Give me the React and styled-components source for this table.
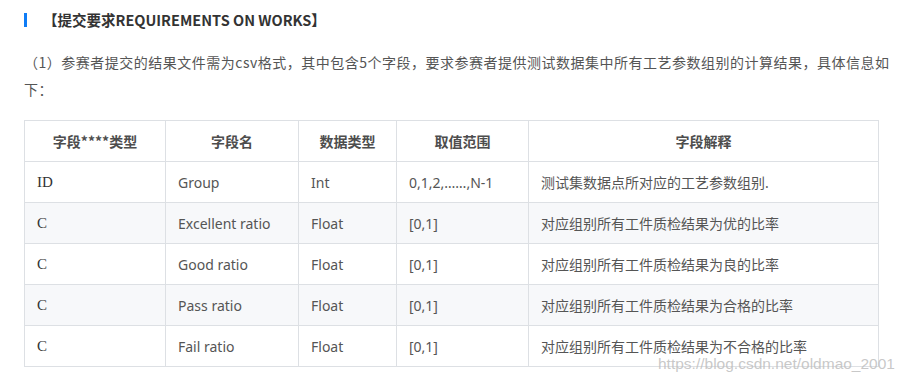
import React from "react";
import styled, { createGlobalStyle } from "styled-components";

const Global = createGlobalStyle`
  html, body { margin: 0; padding: 0; background: #fff; }
  body { font-family: "Noto Sans CJK SC", "Noto Sans", sans-serif; }
`;

const Page = styled.div`
  position: relative;
  width: 907px;
  height: 383px;
  padding: 13px 0 0 24px;
  box-sizing: border-box;
  overflow: hidden;
`;

const Heading = styled.h4`
  margin: 0;
  border-left: 3px solid #0f7cf6;
  padding-left: 16px;
  height: 14px;
  line-height: 14px;
  font-size: 14.5px;
  font-weight: 700;
  color: #333;
`;

const Para = styled.p`
  margin: 22px 0 0 0;
  width: 866px;
  font-size: 14px;
  line-height: 27px;
  color: #555;
  letter-spacing: 0.5px;
`;

const Table = styled.table`
  margin-top: 17px;
  width: 855px;
  border-collapse: collapse;
  table-layout: fixed;
  font-size: 14px;
  color: #555;
`;

const Row = styled.tr`
  background: ${(p) => (p.$striped ? "#f7f8fa" : "#fff")};
`;

const Th = styled.th`
  height: 40px;
  padding: 0 12px;
  border: 1px solid #dde0e4;
  font-weight: 700;
  color: #4d4d4d;
  text-align: center;
`;

const Td = styled.td`
  height: 40px;
  padding: 0 12px;
  border: 1px solid #dde0e4;
  text-align: left;
  white-space: nowrap;
  font-family: ${(p) =>
    p.$serif
      ? '"Liberation Serif", "Noto Sans CJK SC", serif'
      : '"Noto Sans", "Noto Sans CJK SC", sans-serif'};
  font-size: ${(p) => (p.$serif ? "15px" : "14px")};
  color: ${(p) => (p.$serif ? "#333" : "#555")};
`;

const Watermark = styled.div`
  position: absolute;
  left: 658px;
  top: 355px;
  font-family: "Liberation Sans", Arial, sans-serif;
  font-size: 15.5px;
  color: rgba(190, 190, 190, 0.85);
  white-space: nowrap;
`;

const rows = [
  ["ID", "Group", "Int", "0,1,2,……,N-1", "测试集数据点所对应的工艺参数组别."],
  ["C", "Excellent ratio", "Float", "[0,1]", "对应组别所有工件质检结果为优的比率"],
  ["C", "Good ratio", "Float", "[0,1]", "对应组别所有工件质检结果为良的比率"],
  ["C", "Pass ratio", "Float", "[0,1]", "对应组别所有工件质检结果为合格的比率"],
  ["C", "Fail ratio", "Float", "[0,1]", "对应组别所有工件质检结果为不合格的比率"],
];

export default function App() {
  return (
    <>
      <Global />
      <Page>
        <Heading>【提交要求REQUIREMENTS ON WORKS】</Heading>
        <Para>
          （1）参赛者提交的结果文件需为csv格式，其中包含5个字段，要求参赛者提供测试数据集中所有工艺参数组别的计算结果，具体信息如下：
        </Para>
        <Table>
          <colgroup>
            <col style={{ width: 141 }} />
            <col style={{ width: 133 }} />
            <col style={{ width: 98 }} />
            <col style={{ width: 132 }} />
            <col style={{ width: 350 }} />
          </colgroup>
          <thead>
            <Row>
              <Th>字段****类型</Th>
              <Th>字段名</Th>
              <Th>数据类型</Th>
              <Th>取值范围</Th>
              <Th>字段解释</Th>
            </Row>
          </thead>
          <tbody>
            {rows.map((r, i) => (
              <Row key={i} $striped={i % 2 === 1}>
                <Td $serif>{r[0]}</Td>
                <Td>{r[1]}</Td>
                <Td>{r[2]}</Td>
                <Td>{r[3]}</Td>
                <Td>{r[4]}</Td>
              </Row>
            ))}
          </tbody>
        </Table>
        <Watermark>https://blog.csdn.net/oldmao_2001</Watermark>
      </Page>
    </>
  );
}
